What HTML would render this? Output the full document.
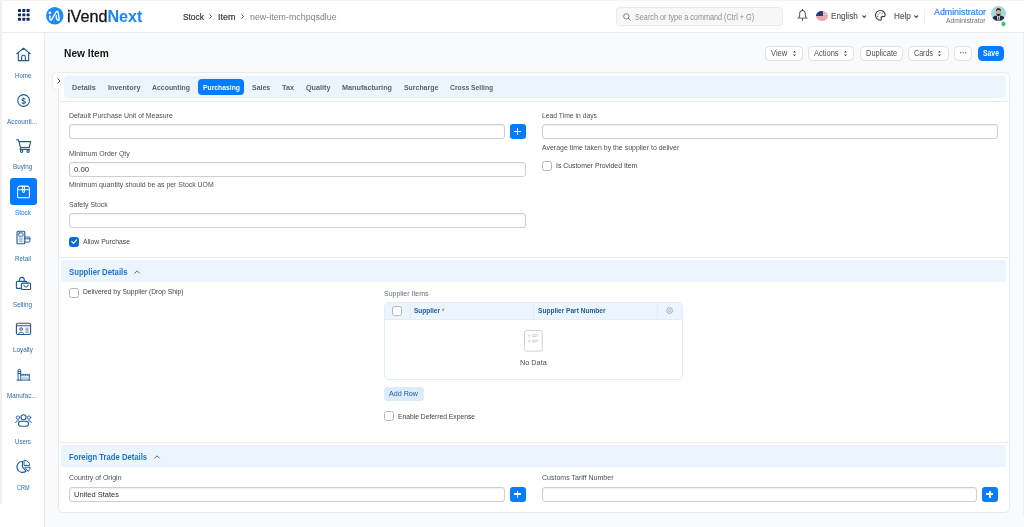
<!DOCTYPE html>
<html lang="en"><head><meta charset="utf-8"><title>New Item</title>
<style>
html,body{margin:0;padding:0;background:#f9fafc;}
body{width:1024px;height:527px;overflow:hidden;font-family:"Liberation Sans",sans-serif;}
#root{will-change:transform;position:relative;width:1024px;height:527px;overflow:hidden;background:#f9fafc;}
#root>*{position:absolute;box-sizing:border-box;}
.t{white-space:nowrap;display:inline-block;transform-origin:0 0;}
.hdr{left:0;top:0;width:1024px;height:33px;background:#fff;border-bottom:1px solid #eaecef;}
.side{left:0;top:33px;width:45px;height:494px;background:#fff;border-right:1px solid #ebecee;}
.card{left:58px;top:72px;width:952px;height:441px;background:#fff;border:1px solid #e9eaec;border-radius:5px;}
.band{background:#ecf4fd;border-radius:3.5px;}
.hl{height:1px;background:#ebecee;}
.inp{height:15px;background:#fff;border:1px solid #cdcfd2;border-radius:3px;box-shadow:inset 0 1px 1.5px rgba(0,0,0,.06);}
.plus{width:16px;height:15.2px;background:#067bfe;border-radius:3px;}
.plus:before,.plus:after{content:"";position:absolute;background:#fff;}
.plus:before{left:4.2px;top:6.8px;width:7.1px;height:1.6px;}
.plus:after{left:6.95px;top:4.3px;width:1.6px;height:6.7px;}
.cb{width:10px;height:10px;background:#fff;border:1px solid #b3b7bc;border-radius:2.5px;}
.cb.on{background:#0a69de;border-color:#0a69de;}
.btn{height:15px;background:#fff;border:1px solid #dfe1e4;border-radius:4.5px;}
svg{overflow:visible;}

</style></head><body>
<div id="root">
<div class="hdr"></div>
<div class="side"></div>
<div style="left:0;top:0;width:2px;height:504px;background:#f0f0f1"></div>
<div style="left:0;top:0;width:1024px;height:1px;background:#f4f4f5"></div>
<div style="left:1023px;top:33px;width:1px;height:484px;background:#eff0f2"></div>
<!-- header icons -->
<svg style="left:17.8px;top:9.2px" width="11.6" height="11.7" viewBox="0 0 11.6 11.7"><g fill="#0b2a6e"><rect x="0.0" y="0.0" width="3" height="2.9" rx=".4"/><rect x="4.3" y="0.0" width="3" height="2.9" rx=".4"/><rect x="8.6" y="0.0" width="3" height="2.9" rx=".4"/><rect x="0.0" y="4.4" width="3" height="2.9" rx=".4"/><rect x="4.3" y="4.4" width="3" height="2.9" rx=".4"/><rect x="8.6" y="4.4" width="3" height="2.9" rx=".4"/><rect x="0.0" y="8.8" width="3" height="2.9" rx=".4"/><rect x="4.3" y="8.8" width="3" height="2.9" rx=".4"/><rect x="8.6" y="8.8" width="3" height="2.9" rx=".4"/></g></svg>
<svg style="left:45.6px;top:7.2px" width="17.5" height="17.5" viewBox="0 0 17.5 17.5"><circle cx="8.75" cy="8.75" r="8.75" fill="#1a8cff"/>
<circle cx="3.9" cy="5.8" r="1.4" fill="#fff"/>
<path d="M3.9 8.9V11.8Q4 14.2 5.8 12.4L10 5.2Q11.6 3 12.2 5.6L13.1 11.7Q13.2 13.9 11.7 13.2Q10.7 12.6 10.5 11.2L10.3 8.8" fill="none" stroke="#fff" stroke-width="1.4" stroke-linecap="round" stroke-linejoin="round"/></svg>
<svg style="left:209.4px;top:13.6px" width="3.2" height="5" viewBox="0 0 3.2 5"><path d="M.5 .5L2.7 2.5L.5 4.5" fill="none" stroke="#50555b" stroke-width="1"/></svg>
<svg style="left:240.7px;top:13.6px" width="3.2" height="5" viewBox="0 0 3.2 5"><path d="M.5 .5L2.7 2.5L.5 4.5" fill="none" stroke="#50555b" stroke-width="1"/></svg>
<div style="left:616px;top:7px;width:167.4px;height:18.5px;background:#f6f7f8;border:1px solid #e7e9eb;border-radius:3.5px"></div>
<svg style="left:623px;top:12.6px" width="8" height="8" viewBox="0 0 8 8"><circle cx="3.3" cy="3.3" r="2.7" fill="none" stroke="#777c82" stroke-width=".9"/><path d="M5.3 5.3L7.5 7.5" stroke="#777c82" stroke-width=".9" stroke-linecap="round"/></svg>
<!-- bell -->
<svg style="left:796.5px;top:9px" width="11" height="12" viewBox="0 0 11 12" fill="none" stroke-linecap="round" stroke-linejoin="round"><path d="M5.5 .5V1.4M1.8 8.8C2.6 7.6 2.7 6.2 2.7 4.3A2.8 2.8 0 0 1 8.3 4.3C8.3 6.2 8.4 7.6 9.2 8.8" stroke="#34383d" stroke-width="1"/><path d="M1 9.1H10" stroke="#7d8187" stroke-width="1.1"/><path d="M5.5 9.8V11.2" stroke="#4a4f55" stroke-width="1.1"/></svg>
<!-- flag -->
<svg style="left:815.5px;top:11px" width="12" height="10" viewBox="0 0 12 10"><defs><clipPath id="fc"><ellipse cx="6" cy="5" rx="6" ry="5"/></clipPath></defs>
<g clip-path="url(#fc)"><rect width="12" height="10" fill="#e9a1a6"/>
<g fill="#f4d3d5"><rect x="6.9" y="1.3" width="5.1" height=".8"/><rect x="6.9" y="3.1" width="5.1" height=".8"/><rect y="5.6" width="12" height=".6" opacity=".6"/><rect y="7.4" width="12" height=".5" opacity=".4"/></g>
<rect x="0" y="0" width="6.9" height="5" fill="#263a78"/></g></svg>
<svg style="left:861.6px;top:14.6px" width="4.4" height="3" viewBox="0 0 4.4 3"><path d="M.4 .5L2.2 2.4L4 .5" fill="none" stroke="#50555b" stroke-width="1.1"/></svg>
<!-- palette -->
<svg style="left:875px;top:10.2px" width="10.6" height="10.6" viewBox="0 0 10.6 10.6"><path d="M5.3 .5A4.8 4.8 0 1 0 5.3 10.1C6.6 10.1 6.6 8.9 6.2 8.3C5.7 7.4 6.3 6.6 7.3 6.6H8.6C9.6 6.6 10.1 5.9 10.1 5A4.7 4.5 0 0 0 5.3 .5Z" fill="none" stroke="#3b3f45" stroke-width="1.15"/>
<g fill="#50555b"><circle cx="3" cy="4.3" r=".55"/><circle cx="4.9" cy="2.9" r=".55"/><circle cx="7.2" cy="3.3" r=".55"/><circle cx="2.7" cy="6.4" r=".55"/></g></svg>
<svg style="left:913.8px;top:14.6px" width="4.4" height="3" viewBox="0 0 4.4 3"><path d="M.4 .5L2.2 2.4L4 .5" fill="none" stroke="#50555b" stroke-width="1.1"/></svg>
<div style="left:924px;top:8.7px;width:1px;height:15px;background:#eeeff0"></div>
<!-- avatar -->
<svg style="left:991px;top:6.2px" width="15" height="15" viewBox="0 0 15 15"><defs><clipPath id="ac"><circle cx="7.5" cy="7.5" r="7.5"/></clipPath></defs>
<g clip-path="url(#ac)"><rect width="15" height="15" fill="#a9d6dd"/>
<path d="M.2 15C.5 11.2 3.2 10.1 5.4 9.6L7.5 11L9.6 9.6C11.8 10.1 14.5 11.2 14.8 15Z" fill="#1b2a48"/>
<path d="M6.1 9.9L7.5 10.6L8.9 9.9L8.4 15H6.6Z" fill="#f3f6f8"/><rect x="7.1" y="10.9" width=".85" height="4.2" fill="#c2353d"/>
<ellipse cx="7.5" cy="6.3" rx="2.3" ry="2.9" fill="#d9a884"/>
<path d="M5.1 5.8C4.8 2.8 6.2 2.2 7.5 2.2C8.8 2.2 10.2 2.8 9.9 5.8C9.6 4.6 8.8 4.1 7.5 4.1C6.2 4.1 5.4 4.6 5.1 5.8Z" fill="#23201f"/>
<path d="M5.4 7C5.6 9.6 6.6 10.2 7.5 10.2C8.4 10.2 9.4 9.6 9.6 7C9 8 8.3 8.1 7.5 8.1C6.7 8.1 6 8 5.4 7Z" fill="#2b2523"/></g></svg>
<svg style="left:1000px;top:21px" width="6" height="6" viewBox="0 0 6 6"><circle cx="3.5" cy="3" r="2.4" fill="#2fc374" stroke="#fff" stroke-width=".5"/></svg>

<!-- page-head buttons -->
<div class="btn" style="left:765.2px;top:45.6px;width:37.5px"></div>
<div class="btn" style="left:808.3px;top:45.6px;width:46px"></div>
<div class="btn" style="left:859.8px;top:45.6px;width:43px"></div>
<div class="btn" style="left:908.2px;top:45.6px;width:40.4px"></div>
<div class="btn" style="left:954px;top:45.6px;width:18px"></div>
<div style="left:977.5px;top:45.6px;width:26.4px;height:15px;background:#067bfe;border-radius:4.5px"></div>
<svg class="ud" style="left:792.6px;top:49.6px" width="3" height="7" viewBox="0 0 3 7"><path d="M0 2.5L1.5 .7L3 2.5ZM0 4.5L1.5 6.3L3 4.5Z" fill="#3f444a"/></svg>
<svg class="ud" style="left:844.2px;top:49.6px" width="3" height="7" viewBox="0 0 3 7"><path d="M0 2.5L1.5 .7L3 2.5ZM0 4.5L1.5 6.3L3 4.5Z" fill="#3f444a"/></svg>
<svg class="ud" style="left:938.2px;top:49.6px" width="3" height="7" viewBox="0 0 3 7"><path d="M0 2.5L1.5 .7L3 2.5ZM0 4.5L1.5 6.3L3 4.5Z" fill="#3f444a"/></svg>
<svg style="left:960px;top:52px" width="6.4" height="1.4" viewBox="0 0 6.4 1.4"><g fill="#4a4f55"><circle cx=".7" cy=".7" r=".6"/><circle cx="3.2" cy=".7" r=".6"/><circle cx="5.7" cy=".7" r=".6"/></g></svg>

<!-- card -->
<div style="left:52.6px;top:72.6px;width:10px;height:16px;background:#fff;border-radius:3px 0 0 3px;box-shadow:0 0 2px rgba(0,0,0,.18)"></div>
<div class="card"></div>
<div style="left:57.5px;top:73px;width:6px;height:15.4px;background:#fff"></div>
<svg style="left:56.6px;top:78.1px" width="3.6" height="6" viewBox="0 0 3.6 6"><path d="M.6 .6L3 3L.6 5.4" fill="none" stroke="#4a4f55" stroke-width="1"/></svg>
<div class="band" style="left:64px;top:76.2px;width:942px;height:21.8px"></div>
<div style="left:197.5px;top:79px;width:46.3px;height:16px;background:#067bfe;border-radius:4px"></div>
<div class="hl" style="left:59px;top:100.5px;width:950px"></div>

<!-- fields left -->
<div class="inp" style="left:69px;top:124px;width:436px"></div>
<div class="plus" style="left:509.8px;top:124px"></div>
<div class="inp" style="left:69px;top:162px;width:456.5px"></div>
<div class="inp" style="left:69px;top:213px;width:456.5px"></div>
<div class="cb on" style="left:69px;top:237px"></div>
<svg style="left:70.8px;top:239.4px" width="6.4" height="5.2" viewBox="0 0 6.4 5.2"><path d="M.8 2.7L2.5 4.3L5.6 .9" fill="none" stroke="#fff" stroke-width="1.1" stroke-linecap="round" stroke-linejoin="round"/></svg>
<!-- fields right -->
<div class="inp" style="left:541.7px;top:124px;width:456.5px"></div>
<div class="cb" style="left:541.9px;top:161.2px"></div>

<!-- supplier section -->
<div class="hl" style="left:59px;top:256.7px;width:950px"></div>
<div class="band" style="left:61px;top:260px;width:945px;height:21.5px"></div>
<svg style="left:134.4px;top:269.8px" width="6.2" height="4" viewBox="0 0 6.2 4"><path d="M.5 3.4L3.1 .8L5.7 3.4" fill="none" stroke="#5a5f66" stroke-width=".95"/></svg>
<div class="cb" style="left:69px;top:287.8px"></div>
<!-- grid -->
<div style="left:384.2px;top:301.5px;width:299px;height:78px;background:#fff;border:1px solid #e0edfb;border-radius:5px;overflow:hidden">
 <div style="position:absolute;left:0;top:0;width:297px;height:16.8px;background:#ecf4fd;border-bottom:1px solid #e0edfb"></div>
 <div style="position:absolute;left:25px;top:0;width:1px;height:16.8px;background:#dfecfb"></div>
 <div style="position:absolute;left:148px;top:0;width:1px;height:16.8px;background:#dfecfb"></div>
 <div style="position:absolute;left:272.3px;top:0;width:1px;height:16.8px;background:#dfecfb"></div>
</div>
<div class="cb" style="left:392px;top:306.2px"></div>
<svg style="left:666.4px;top:306.9px" width="7.2" height="7.2" viewBox="0 0 7.2 7.2"><circle cx="3.6" cy="3.6" r="2.9" fill="none" stroke="#9a9fa5" stroke-width=".85"/><circle cx="3.6" cy="3.6" r="1.1" fill="none" stroke="#9a9fa5" stroke-width=".75"/></svg>
<!-- no-data icon -->
<svg style="left:523.8px;top:330px" width="18.8" height="21.6" viewBox="0 0 18.8 21.6"><rect x=".5" y=".5" width="17.8" height="20.6" rx="2.2" fill="#fff" stroke="#c9cdd2" stroke-width=".9"/>
<g fill="none" stroke="#c3c7cc" stroke-width=".7"><circle cx="5.4" cy="5.6" r=".85"/><circle cx="5.4" cy="11" r=".85"/></g>
<g stroke="#c3c7cc" stroke-width=".85"><path d="M8.2 4.9H14.6M8.2 6.5H12.6M8.2 10.3H14.6M8.2 11.9H12.6"/></g></svg>
<div style="left:384.2px;top:386.5px;width:39.6px;height:14px;background:#dcebfb;border-radius:3.5px"></div>
<div class="cb" style="left:384.2px;top:411.3px"></div>

<!-- foreign trade -->
<div class="hl" style="left:59px;top:441.8px;width:950px"></div>
<div class="band" style="left:61px;top:445px;width:945px;height:21.7px"></div>
<svg style="left:154.4px;top:454.8px" width="6.2" height="4" viewBox="0 0 6.2 4"><path d="M.5 3.4L3.1 .8L5.7 3.4" fill="none" stroke="#5a5f66" stroke-width=".95"/></svg>
<div class="inp" style="left:69px;top:486.6px;width:436px"></div>
<div class="plus" style="left:509.8px;top:486.6px"></div>
<div class="inp" style="left:541.7px;top:486.6px;width:435.6px"></div>
<div class="plus" style="left:982px;top:486.6px"></div>
<div style="left:9.8px;top:178.1px;width:27.1px;height:27.3px;background:#067bfe;border-radius:3px"></div>
<svg style="left:0;top:0" width="45" height="527" viewBox="0 0 45 527" fill="none" stroke="#1c5a96" stroke-width="1.1" stroke-linecap="round" stroke-linejoin="round">
<!-- home -->
<path d="M16.8 53.6L23.5 48.3L30.2 53.6M18.3 52.6V60.6H28.7V52.6M21.6 60.6V57.2A1.9 1.9 0 0 1 25.4 57.2V60.6"/>
<!-- accounting -->
<circle cx="23.6" cy="100.5" r="5.85"/>
<text x="23.6" y="103.5" font-size="8.4" font-weight="700" text-anchor="middle" fill="#1c5a96" stroke="none" font-family="Liberation Sans, sans-serif">$</text>
<!-- buying cart -->
<path d="M16.4 139.7H18.4L20.5 147.5H29.2L30.7 141.6H19.2M20.5 147.5L20.1 149.4H29.6"/>
<circle cx="21.6" cy="151.2" r="1.15"/><circle cx="28.1" cy="151.2" r="1.15"/>
<!-- stock (white) -->
<g stroke="#fff" stroke-width="1.05"><path d="M17.6 189.8V188.4A2.3 2.3 0 0 1 19.9 186.1H27.1A2.3 2.3 0 0 1 29.4 188.4V189.8M17.6 189.8H29.4V196.7A1.1 1.1 0 0 1 28.3 197.8H18.7A1.1 1.1 0 0 1 17.6 196.7ZM22.6 186.1V191.6A.9 .9 0 0 0 24.4 191.6V186.1"/></g>
<!-- retail -->
<rect x="17" y="231.2" width="7.8" height="12.6" rx="1.3"/>
<rect x="18.7" y="232.9" width="4.4" height="3.3" rx=".5" stroke-width=".9"/>
<path d="M18.7 238.2H23.1M18.7 239.8H23.1M18.7 241.4H23.1M20.2 237.6V242M21.7 237.6V242" stroke-width=".45" stroke="#5e8fc0"/>
<path d="M24.8 237H29A.9 .9 0 0 1 29.9 237.9V241.2A.9 .9 0 0 1 29 242.1H24.8M24.8 238.8H29.9" stroke-width=".95"/>
<!-- selling -->
<path d="M21.3 288.4H17.4A1 1 0 0 1 16.4 287.4V282.4A1 1 0 0 1 17.4 281.4H26A1 1 0 0 1 27 282.4V283M19.5 281.4V279.8A2.4 2.4 0 0 1 24.3 279.8V281.4"/>
<rect x="21.4" y="283.1" width="9.2" height="6.4" rx="1.1"/>
<path d="M23.8 284.9A2.2 2.2 0 0 0 28.2 284.9" stroke-width=".95"/>
<!-- loyalty -->
<rect x="16.4" y="323.3" width="14.2" height="11.2" rx="1.6"/>
<path d="M16.4 325.8H30.6"/>
<circle cx="21.1" cy="329" r="1.35" stroke-width=".9"/>
<path d="M18.6 333.8A2.6 2.4 0 0 1 23.6 333.8" stroke-width=".9"/>
<path d="M25.8 328.2H28.2M25.8 329.7H28.2M25.8 331.2H28.2M25.8 332.6H28.2" stroke-width=".6"/>
<!-- manufacturing -->
<path d="M17 380.1H30M18.1 380.1V370.3A.9 .9 0 0 1 19 369.4H19.8A.9 .9 0 0 1 20.7 370.3V380.1M18.1 371.6H20.7M18.1 373.6H20.7M20.7 375H29.3V380.1" stroke-width=".95"/>
<path d="M22 375V374.2M23.8 375V374.2M25.6 375V374.2M27.4 375V374.2M29.3 375V374.2" stroke-width=".9"/>
<path d="M22 377.2H28M22 378.6H28" stroke-width=".5" stroke="#5e8fc0"/>
<!-- users -->
<circle cx="23.5" cy="417.3" r="2.5"/>
<rect x="18.5" y="421.3" width="10" height="4.9" rx="2.4"/>
<circle cx="18" cy="417.6" r="1.7" stroke-width=".9"/><circle cx="29" cy="417.6" r="1.7" stroke-width=".9"/>
<path d="M15.6 422.6A2.6 2.6 0 0 1 18.4 420.6M31.4 422.6A2.6 2.6 0 0 0 28.6 420.6" stroke-width=".9"/>
<!-- crm -->
<path d="M22.4 461.2A5.6 5.6 0 1 0 26 471.2L22.4 466.8Z"/>
<path d="M24.4 460.2A5.4 5.4 0 0 1 29.8 465.4H24.4Z" stroke-width=".95"/>
<path d="M25.2 467.2H30.2A5.6 5.6 0 0 1 28.4 471.2Z" stroke-width=".95"/>
</svg>


<span class="t" style="left:67.10px;top:9px;font-size:15.7px;line-height:15.7px;font-weight:400;color:#14171a;transform:scaleX(1.0289);-webkit-text-stroke:.3px #14171a;">iVend<b style="color:#1787fb;font-weight:700;-webkit-text-stroke:0">Next</b></span>
<span class="t" style="left:182.90px;top:13px;font-size:9.2px;line-height:9.2px;font-weight:400;color:#33373c;transform:scaleX(0.9071);-webkit-text-stroke:.2px #33373c;">Stock</span>
<span class="t" style="left:217.80px;top:13px;font-size:9.2px;line-height:9.2px;font-weight:400;color:#33373c;transform:scaleX(0.9734);-webkit-text-stroke:.2px #33373c;">Item</span>
<span class="t" style="left:249.50px;top:13px;font-size:9.2px;line-height:9.2px;font-weight:400;color:#7c8085;transform:scaleX(0.9647);">new-item-mchpqsdlue</span>
<span class="t" style="left:634.80px;top:13px;font-size:8.3px;line-height:8.3px;font-weight:400;color:#8a8f96;transform:scaleX(0.8740);">Search or type a command (Ctrl + G)</span>
<span class="t" style="left:830.60px;top:12px;font-size:9.3px;line-height:9.3px;font-weight:400;color:#53585e;transform:scaleX(0.8787);-webkit-text-stroke:.15px #53585e;">English</span>
<span class="t" style="left:893.70px;top:12px;font-size:9.3px;line-height:9.3px;font-weight:400;color:#53585e;transform:scaleX(0.8784);-webkit-text-stroke:.15px #53585e;">Help</span>
<span class="t" style="left:933.50px;top:8px;font-size:8.6px;line-height:8.6px;font-weight:400;color:#2f86eb;transform:scaleX(1.0272);-webkit-text-stroke:.2px #2f86eb;">Administrator</span>
<span class="t" style="left:946.00px;top:18px;font-size:6.5px;line-height:6.5px;font-weight:400;color:#6b7075;transform:scaleX(1.0314);">Administrator</span>
<span class="t" style="left:63.75px;top:48px;font-size:10.6px;line-height:10.6px;font-weight:700;color:#14171a;transform:scaleX(0.9642);">New Item</span>
<span class="t" style="left:770.80px;top:49px;font-size:8.3px;line-height:8.3px;font-weight:400;color:#4a4f55;transform:scaleX(0.9079);">View</span>
<span class="t" style="left:814.00px;top:49px;font-size:8.3px;line-height:8.3px;font-weight:400;color:#4a4f55;transform:scaleX(0.9038);">Actions</span>
<span class="t" style="left:865.80px;top:49px;font-size:8.3px;line-height:8.3px;font-weight:400;color:#4a4f55;transform:scaleX(0.8990);">Duplicate</span>
<span class="t" style="left:914.00px;top:49px;font-size:8.3px;line-height:8.3px;font-weight:400;color:#4a4f55;transform:scaleX(0.8582);">Cards</span>
<span class="t" style="left:982.50px;top:49px;font-size:8.3px;line-height:8.3px;font-weight:700;color:#ffffff;transform:scaleX(0.8251);">Save</span>
<span class="t" style="left:72.25px;top:84px;font-size:8.0px;line-height:8.0px;font-weight:700;color:#5d636b;transform:scaleX(0.9053);">Details</span>
<span class="t" style="left:108.00px;top:84px;font-size:8.0px;line-height:8.0px;font-weight:700;color:#5d636b;transform:scaleX(0.9024);">Inventory</span>
<span class="t" style="left:152.00px;top:84px;font-size:8.0px;line-height:8.0px;font-weight:700;color:#5d636b;transform:scaleX(0.8636);">Accounting</span>
<span class="t" style="left:202.50px;top:84px;font-size:8.0px;line-height:8.0px;font-weight:700;color:#ffffff;transform:scaleX(0.8490);">Purchasing</span>
<span class="t" style="left:251.50px;top:84px;font-size:8.0px;line-height:8.0px;font-weight:700;color:#5d636b;transform:scaleX(0.8729);">Sales</span>
<span class="t" style="left:281.50px;top:84px;font-size:8.0px;line-height:8.0px;font-weight:700;color:#5d636b;transform:scaleX(0.9089);">Tax</span>
<span class="t" style="left:305.75px;top:84px;font-size:8.0px;line-height:8.0px;font-weight:700;color:#5d636b;transform:scaleX(0.9032);">Quality</span>
<span class="t" style="left:342.00px;top:84px;font-size:8.0px;line-height:8.0px;font-weight:700;color:#5d636b;transform:scaleX(0.9073);">Manufacturing</span>
<span class="t" style="left:403.75px;top:84px;font-size:8.0px;line-height:8.0px;font-weight:700;color:#5d636b;transform:scaleX(0.8654);">Surcharge</span>
<span class="t" style="left:450.00px;top:84px;font-size:8.0px;line-height:8.0px;font-weight:700;color:#5d636b;transform:scaleX(0.8460);">Cross Selling</span>
<span class="t" style="left:69.00px;top:112px;font-size:7.5px;line-height:7.5px;font-weight:400;color:#4b5056;transform:scaleX(0.9217);">Default Purchase Unit of Measure</span>
<span class="t" style="left:69.00px;top:150px;font-size:7.5px;line-height:7.5px;font-weight:400;color:#4b5056;transform:scaleX(0.9284);">Minimum Order Qty</span>
<span class="t" style="left:74.00px;top:166px;font-size:7.8px;line-height:7.8px;font-weight:400;color:#2b2f33;transform:scaleX(0.9877);">0.00</span>
<span class="t" style="left:69.00px;top:181px;font-size:7.5px;line-height:7.5px;font-weight:400;color:#4b5056;transform:scaleX(0.9235);">Minimum quantity should be as per Stock UOM</span>
<span class="t" style="left:69.00px;top:201px;font-size:7.5px;line-height:7.5px;font-weight:400;color:#4b5056;transform:scaleX(0.9202);">Safety Stock</span>
<span class="t" style="left:83.25px;top:238px;font-size:7.5px;line-height:7.5px;font-weight:400;color:#3f444a;transform:scaleX(0.9090);">Allow Purchase</span>
<span class="t" style="left:541.75px;top:112px;font-size:7.5px;line-height:7.5px;font-weight:400;color:#4b5056;transform:scaleX(0.9035);">Lead Time in days</span>
<span class="t" style="left:541.75px;top:144px;font-size:7.5px;line-height:7.5px;font-weight:400;color:#4b5056;transform:scaleX(0.9281);">Average time taken by the supplier to deliver</span>
<span class="t" style="left:555.75px;top:162px;font-size:7.5px;line-height:7.5px;font-weight:400;color:#3f444a;transform:scaleX(0.9152);">Is Customer Provided Item</span>
<span class="t" style="left:69.00px;top:267px;font-size:9.8px;line-height:9.8px;font-weight:700;color:#1a73d9;transform:scaleX(0.7900);">Supplier Details</span>
<span class="t" style="left:83.25px;top:288px;font-size:7.5px;line-height:7.5px;font-weight:400;color:#3f444a;transform:scaleX(0.8996);">Delivered by Supplier (Drop Ship)</span>
<span class="t" style="left:384.25px;top:290px;font-size:7.5px;line-height:7.5px;font-weight:400;color:#6b7075;transform:scaleX(0.9283);">Supplier Items</span>
<span class="t" style="left:414.00px;top:307px;font-size:7.6px;line-height:7.6px;font-weight:700;color:#1c5a96;transform:scaleX(0.8555);">Supplier</span>
<span class="t" style="left:442.20px;top:308px;font-size:8.2px;line-height:8.2px;font-weight:400;color:#e24c4c;transform:scaleX(0.7529);">*</span>
<span class="t" style="left:538.00px;top:307px;font-size:7.6px;line-height:7.6px;font-weight:700;color:#1c5a96;transform:scaleX(0.8647);">Supplier Part Number</span>
<span class="t" style="left:520.00px;top:359px;font-size:7.8px;line-height:7.8px;font-weight:400;color:#4a4f55;transform:scaleX(0.9350);">No Data</span>
<span class="t" style="left:389.25px;top:390px;font-size:8.0px;line-height:8.0px;font-weight:400;color:#1c5a96;transform:scaleX(0.8932);">Add Row</span>
<span class="t" style="left:398.25px;top:413px;font-size:7.5px;line-height:7.5px;font-weight:400;color:#3f444a;transform:scaleX(0.8965);">Enable Deferred Expense</span>
<span class="t" style="left:69.40px;top:452px;font-size:9.8px;line-height:9.8px;font-weight:700;color:#1a73d9;transform:scaleX(0.7838);">Foreign Trade Details</span>
<span class="t" style="left:69.00px;top:474px;font-size:7.5px;line-height:7.5px;font-weight:400;color:#4b5056;transform:scaleX(0.9259);">Country of Origin</span>
<span class="t" style="left:74.00px;top:491px;font-size:7.8px;line-height:7.8px;font-weight:400;color:#2b2f33;transform:scaleX(0.9613);">United States</span>
<span class="t" style="left:541.50px;top:474px;font-size:7.5px;line-height:7.5px;font-weight:400;color:#4b5056;transform:scaleX(0.9356);">Customs Tariff Number</span>
<span class="t" style="left:14.70px;top:73px;font-size:6.6px;line-height:6.6px;font-weight:400;color:#2a6db0;transform:scaleX(0.9321);">Home</span>
<span class="t" style="left:7.00px;top:119px;font-size:6.6px;line-height:6.6px;font-weight:400;color:#2a6db0;transform:scaleX(0.9741);">Accounti...</span>
<span class="t" style="left:13.30px;top:164px;font-size:6.6px;line-height:6.6px;font-weight:400;color:#2a6db0;transform:scaleX(0.9518);">Buying</span>
<span class="t" style="left:15.00px;top:210px;font-size:6.6px;line-height:6.6px;font-weight:400;color:#1579f5;transform:scaleX(0.9697);">Stock</span>
<span class="t" style="left:14.80px;top:256px;font-size:6.6px;line-height:6.6px;font-weight:400;color:#2a6db0;transform:scaleX(0.9431);">Retail</span>
<span class="t" style="left:13.30px;top:302px;font-size:6.6px;line-height:6.6px;font-weight:400;color:#2a6db0;transform:scaleX(0.9547);">Selling</span>
<span class="t" style="left:13.00px;top:347px;font-size:6.6px;line-height:6.6px;font-weight:400;color:#2a6db0;transform:scaleX(0.9567);">Loyalty</span>
<span class="t" style="left:7.40px;top:393px;font-size:6.6px;line-height:6.6px;font-weight:400;color:#2a6db0;transform:scaleX(0.9611);">Manufac...</span>
<span class="t" style="left:15.00px;top:439px;font-size:6.6px;line-height:6.6px;font-weight:400;color:#2a6db0;transform:scaleX(0.9234);">Users</span>
<span class="t" style="left:16.50px;top:485px;font-size:6.6px;line-height:6.6px;font-weight:400;color:#2a6db0;transform:scaleX(0.8316);">CRM</span>
</div>
</body></html>
